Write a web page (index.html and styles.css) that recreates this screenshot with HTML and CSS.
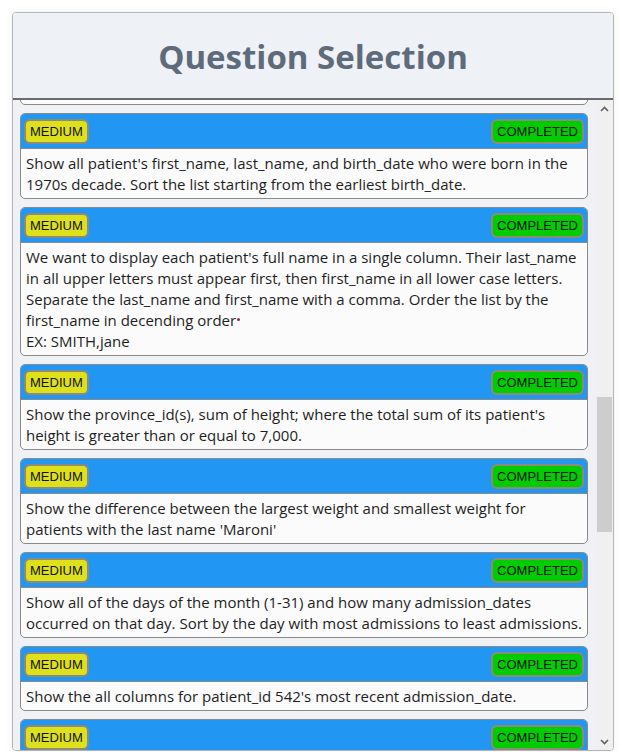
FILE: index.html
```html
<!DOCTYPE html>
<html lang="en">
<head>
<meta charset="utf-8">
<title>Question Selection</title>
<link rel="stylesheet" href="styles.css">
</head>
<body>
<div class="card">
  <div class="card-header"><h1 class="title">Question Selection</h1></div>
  <div class="list-wrap">
  <div class="list" id="list">
    <div class="item"><div class="item-head"><span class="badge medium">MEDIUM</span><span class="badge done">COMPLETED</span></div><div class="item-body">Show unique birth years from patients and order them by ascending.</div></div>
    <div class="item"><div class="item-head"><span class="badge medium">MEDIUM</span><span class="badge done">COMPLETED</span></div><div class="item-body">Show unique first names from the patients table which only occurs once in the list.</div></div>
    <div class="item"><div class="item-head"><span class="badge medium">MEDIUM</span><span class="badge done">COMPLETED</span></div><div class="item-body">Show patient_id and first_name from patients where their first_name start and ends with 's' and is at least 6 characters long.</div></div>
    <div class="item"><div class="item-head"><span class="badge medium">MEDIUM</span><span class="badge done">COMPLETED</span></div><div class="item-body">Show patient_id, first_name, last_name from patients whos diagnosis is 'Dementia'.</div></div>
    <div class="item"><div class="item-head"><span class="badge medium">MEDIUM</span><span class="badge done">COMPLETED</span></div><div class="item-body">Display every patient's first_name. Order the list by the length of each name and then by alphabetically.</div></div>
    <div class="item"><div class="item-head"><span class="badge medium">MEDIUM</span><span class="badge done">COMPLETED</span></div><div class="item-body">Show the total amount of male patients and the total amount of female patients in the patients table. Display the two results in the same row.</div></div>
    <div class="item"><div class="item-head"><span class="badge medium">MEDIUM</span><span class="badge done">COMPLETED</span></div><div class="item-body">Show first and last name, allergies from patients which have allergies to either 'Penicillin' or 'Morphine'. Show results ordered ascending by allergies then by first_name then by last_name.</div></div>
    <div class="item"><div class="item-head"><span class="badge medium">MEDIUM</span><span class="badge done">COMPLETED</span></div><div class="item-body">Show patient_id, diagnosis from admissions. Find patients admitted multiple times for the same diagnosis.</div></div>
    <div class="item"><div class="item-head"><span class="badge medium">MEDIUM</span><span class="badge done">COMPLETED</span></div><div class="item-body">Show the city and the total number of patients in the city. Order from most to least patients and then by city name ascending.</div></div>
    <div class="item"><div class="item-head"><span class="badge medium">MEDIUM</span><span class="badge done">COMPLETED</span></div><div class="item-body">Show first name, last name and role of every person that is either patient or doctor. The roles are either "Patient" or "Doctor"</div></div>
    <div class="item"><div class="item-head"><span class="badge medium">MEDIUM</span><span class="badge done">COMPLETED</span></div><div class="item-body">Show all allergies ordered by popularity. Remove NULL values from query.</div></div>
    <div class="item" id="target"><div class="item-head"><span class="badge medium">MEDIUM</span><span class="badge done">COMPLETED</span></div><div class="item-body">Show all patient's first_name, last_name, and birth_date who were born in the 1970s decade. Sort the list starting from the earliest birth_date.</div></div>
    <div class="item"><div class="item-head"><span class="badge medium">MEDIUM</span><span class="badge done">COMPLETED</span></div><div class="item-body">We want to display each patient's full name in a single column. Their last_name in all upper letters must appear first, then first_name in all lower case letters. Separate the last_name and first_name with a comma. Order the list by the first_name in decending order<span class="dot"></span><br>EX: SMITH,jane</div></div>
    <div class="item"><div class="item-head"><span class="badge medium">MEDIUM</span><span class="badge done">COMPLETED</span></div><div class="item-body">Show the province_id(s), sum of height; where the total sum of its patient's height is greater than or equal to 7,000.</div></div>
    <div class="item"><div class="item-head"><span class="badge medium">MEDIUM</span><span class="badge done">COMPLETED</span></div><div class="item-body">Show the difference between the largest weight and smallest weight for patients with the last name 'Maroni'</div></div>
    <div class="item"><div class="item-head"><span class="badge medium">MEDIUM</span><span class="badge done">COMPLETED</span></div><div class="item-body">Show all of the days of the month (1-31) and how many admission_dates occurred on that day. Sort by the day with most admissions to least admissions.</div></div>
    <div class="item"><div class="item-head"><span class="badge medium">MEDIUM</span><span class="badge done">COMPLETED</span></div><div class="item-body">Show the all columns for patient_id 542's most recent admission_date.</div></div>
    <div class="item"><div class="item-head"><span class="badge medium">MEDIUM</span><span class="badge done">COMPLETED</span></div><div class="item-body">Show patient_id, attending_doctor_id, and diagnosis for admissions that match one of the two criteria: patient_id is an odd number and attending_doctor_id is either 1, 5, or 19.</div></div>
    <div class="item"><div class="item-head"><span class="badge medium">MEDIUM</span><span class="badge done">COMPLETED</span></div><div class="item-body">Show first_name, last_name, and the total number of admissions attended for each doctor.</div></div>
    <div class="item"><div class="item-head"><span class="badge medium">MEDIUM</span><span class="badge done">COMPLETED</span></div><div class="item-body">For each doctor, display their id, full name, and the first and last admission date they attended.</div></div>
    <div class="item"><div class="item-head"><span class="badge medium">MEDIUM</span><span class="badge done">COMPLETED</span></div><div class="item-body">Display the total amount of patients for each province. Order by descending.</div></div>
  </div>
  <div class="scrollbar" aria-hidden="true">
    <div class="sb-btn"><svg width="9" height="6" viewBox="0 0 9 6"><path d="M1 5 L4.5 1.5 L8 5" fill="none" stroke="#606060" stroke-width="1.6"/></svg></div>
    <div class="sb-track"><div class="sb-thumb"></div></div>
    <div class="sb-btn"><svg width="9" height="6" viewBox="0 0 9 6"><path d="M1 1 L4.5 4.5 L8 1" fill="none" stroke="#606060" stroke-width="1.6"/></svg></div>
  </div>
  </div>
</div>
<script src="script.js"></script>
</body>
</html>
```

FILE: styles.css
```css
html, body {
  margin: 0;
  padding: 0;
  background: #ffffff;
}

body {
  font-family: "Open Sans", "Noto Sans", sans-serif;
  color: #1f1f1f;
}

.card {
  margin: 12px;
  width: 600px;
  height: 737px;
  border: 1px solid #b4b4b4;
  border-radius: 4px;
  overflow: hidden;
  display: flex;
  flex-direction: column;
  box-shadow: 0 0 10px rgba(0, 0, 0, 0.06);
}

.card-header {
  flex: 0 0 85px;
  background: #eef1f5;
  border-bottom: 2px solid #666c72;
  display: flex;
  align-items: center;
  justify-content: center;
}

.title {
  margin: 0;
  font-family: "Open Sans", "Noto Sans", sans-serif;
  font-weight: 700;
  font-size: 33px;
  color: #5d6b7a;
  padding-top: 2px;
}

.list-wrap {
  flex: 1 1 auto;
  min-height: 0;
  display: flex;
}

.list {
  position: relative;
  flex: 1 1 auto;
  min-width: 0;
  overflow: hidden;
  background: #eff1f4;
  display: flex;
  flex-direction: column;
  gap: 8px;
  padding: 8px 8px 8px 7px;
}

.scrollbar {
  flex: 0 0 17px;
  background: #f0f0f0;
  display: flex;
  flex-direction: column;
}

.sb-btn {
  flex: 0 0 17px;
  display: flex;
  align-items: center;
  justify-content: center;
}

.sb-track {
  flex: 1 1 auto;
  padding-top: 280px;
}

.sb-thumb {
  height: 135px;
  margin: 0 1px 0 1px;
  background: #cdcdcd;
}

.item {
  flex: 0 0 auto;
  border: 1px solid #8a8a8a;
  border-radius: 5px;
  overflow: hidden;
  background: #fbfbfb;
}

.item-head {
  height: 34px;
  background: #2196f3;
  border-bottom: 1px solid #8a8a8a;
  display: flex;
  align-items: center;
  justify-content: space-between;
  padding: 0 3px;
}

.badge {
  font-family: "Liberation Sans", Arial, sans-serif;
  font-size: 13px;
  line-height: 21px;
  padding: 0 4px;
  border: 2px solid #8b8b78;
  border-radius: 6px;
  color: #111;
}

.medium {
  background: #dfe01c;
}

.done {
  background: #00cc00;
}

.item-body {
  padding: 4px 5px 3px 5px;
  font-size: 15px;
  line-height: 21px;
  color: #1e1e1e;
}

.dot {
  display: inline-block;
  width: 3px;
  height: 3px;
  border-radius: 50%;
  background: #a0205a;
  vertical-align: 5px;
  margin-left: 1px;
}
```

FILE: script.js
```js
var list = document.getElementById('list');
var target = document.getElementById('target');
list.scrollTop = target.offsetTop - 13;
```
